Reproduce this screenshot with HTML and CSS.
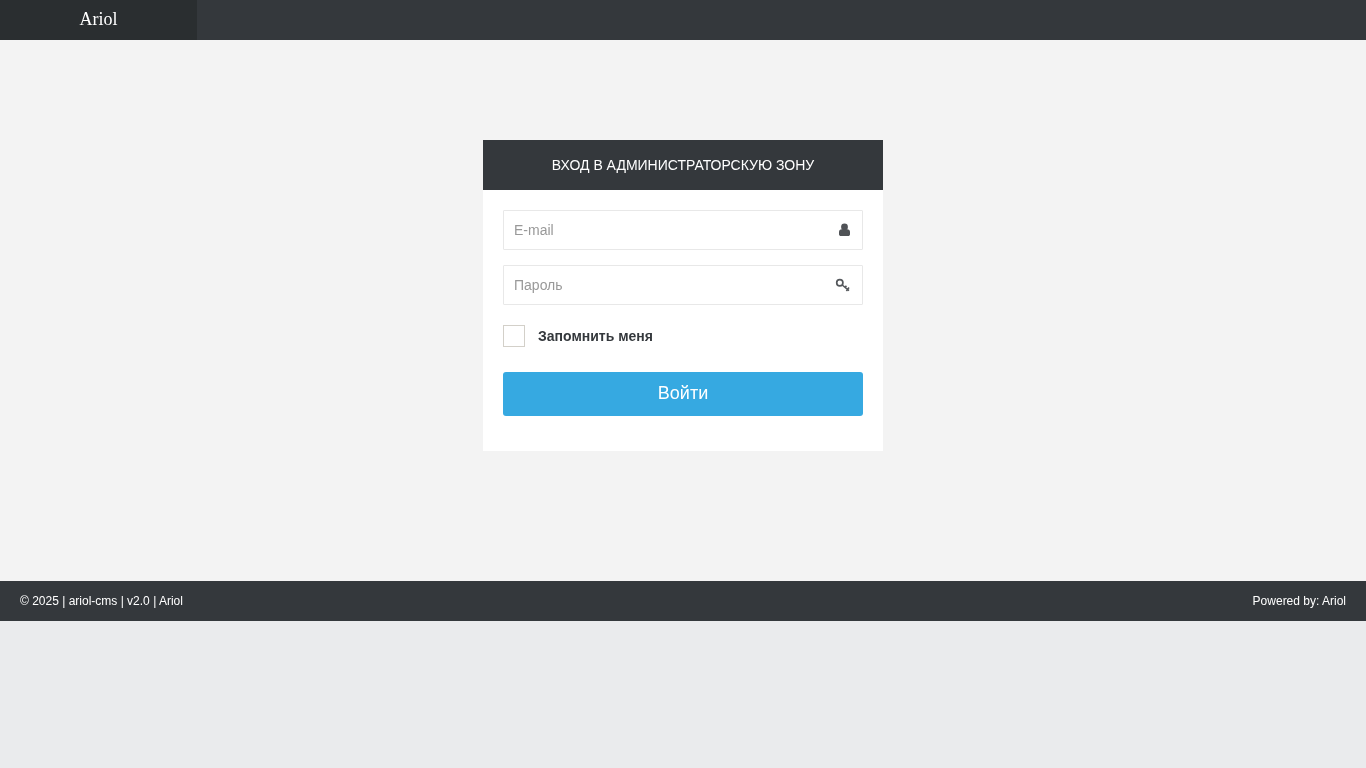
FILE: index.html
```html
<!DOCTYPE html>
<html lang="ru">
<head>
<meta charset="utf-8">
<title>Ariol</title>
<link rel="stylesheet" href="styles.css">
</head>
<body>
<div class="page">
  <header class="topbar">
    <div class="brand">Ariol</div>
  </header>
  <main class="content">
    <form class="card">
      <div class="card-head">ВХОД В АДМИНИСТРАТОРСКУЮ ЗОНУ</div>
      <div class="card-body">
        <div class="field">
          <input class="input" type="text" placeholder="E-mail">
          <svg class="icon icon-user" width="11" height="13" viewBox="0 0 11 13"><circle cx="5.5" cy="3.9" r="3.4" fill="#4f5256"/><path d="M0 11V9C0 7.2 1.2 6.2 2.8 6.2H8.2C9.8 6.2 11 7.2 11 9V11C11 12.4 10.2 13 9 13H2C.8 13 0 12.4 0 11Z" fill="#4f5256"/></svg>
        </div>
        <div class="field">
          <input class="input" type="password" placeholder="Пароль">
          <svg class="icon icon-key" width="15" height="14" viewBox="0 0 15 14"><circle cx="4.8" cy="4.8" r="3.1" fill="none" stroke="#55585c" stroke-width="1.7"/><path d="M7.2 7L14 12.6M10 9.4L11.4 7.7M14 9.6L11.4 13" fill="none" stroke="#55585c" stroke-width="1.6"/></svg>
        </div>
        <label class="remember">
          <span class="box"></span>
          <span class="remember-text">Запомнить меня</span>
        </label>
        <button class="submit" type="button">Войти</button>
      </div>
    </form>
  </main>
  <footer class="footer">
    <span>© 2025 | ariol-cms | v2.0 | Ariol</span>
    <span>Powered by: Ariol</span>
  </footer>
</div>
</body>
</html>
```
FILE: styles.css
```css
* { box-sizing: border-box; }
html, body { margin: 0; padding: 0; }
body {
  background: #eaebed;
  font-family: "Liberation Sans", Arial, sans-serif;
  height: 768px;
  overflow: hidden;
}
.page { display: flex; flex-direction: column; height: 621px; will-change: transform; }
.topbar { height: 40px; background: #34383c; display: flex; flex: none; }
.brand {
  width: 197px;
  background: #2a2e30;
  color: #fff;
  font-family: "Liberation Serif", "Times New Roman", serif;
  font-size: 18px;
  line-height: 38px;
  text-align: center;
}
.content {
  flex: 1;
  background: #f3f3f3;
  display: flex;
  justify-content: center;
  padding-top: 100px;
}
.card { width: 400px; height: 311px; background: #fff; }
.card-head {
  height: 50px;
  background: #34383c;
  color: #fff;
  font-size: 14px;
  line-height: 50px;
  text-align: center;
}
.card-body { padding: 20px 20px 35px; display: flex; flex-direction: column; }
.field { position: relative; height: 40px; margin-bottom: 15px; }
.input {
  display: block;
  width: 100%;
  height: 40px;
  border: 1px solid #e8e8e8;
  border-radius: 1px;
  padding: 0 10px;
  font-family: inherit;
  font-size: 14px;
  color: #333;
  background: #fff;
  outline: none;
}
.input::placeholder { color: #999; opacity: 1; }
.icon { position: absolute; }
.icon-user { right: 13px; top: 13px; }
.icon-key { right: 13px; top: 13px; }
.remember { display: flex; align-items: center; height: 22px; margin: 5px 0 25px; gap: 13px; }
.box { width: 22px; height: 22px; border: 1px solid #d3d0c9; background: #fff; flex: none; }
.remember-text { font-size: 14px; font-weight: bold; color: #34383c; }
.submit {
  height: 44px;
  border: 0;
  border-radius: 3px;
  background: #36a9e1;
  color: #fff;
  font-family: inherit;
  font-size: 18px;
  padding: 0 0 2px;
}
.footer {
  height: 40px;
  flex: none;
  background: #34383c;
  color: #fff;
  font-size: 12px;
  padding: 0 20px;
  display: flex;
  align-items: center;
  justify-content: space-between;
}
```
